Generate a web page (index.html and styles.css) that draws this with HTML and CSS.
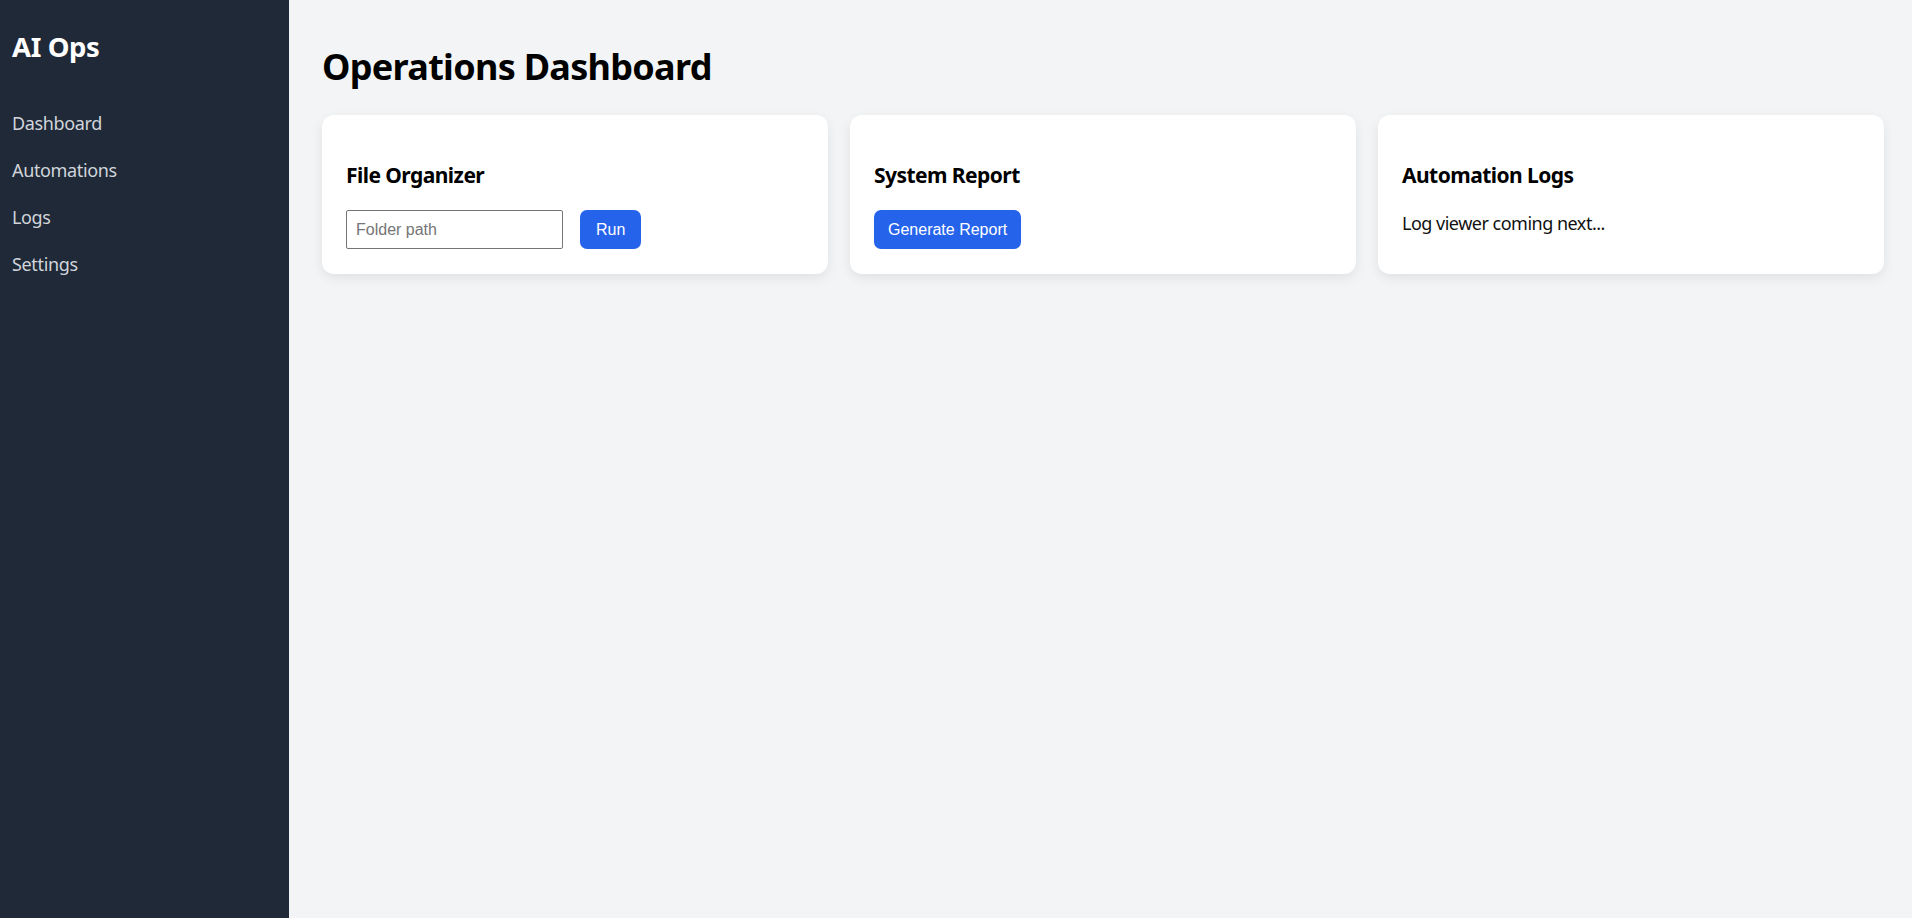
FILE: index.html
```html
<!DOCTYPE html>
<html lang="en">
<head>
    <meta charset="UTF-8">
    <meta name="viewport" content="width=device-width, initial-scale=1.0">
    <title>AI Ops</title>
    <link rel="stylesheet" href="styles.css">
</head>
<body>
    <aside class="sidebar">
        <h2>AI Ops</h2>
        <nav class="menu">
            <a href="#">Dashboard</a>
            <a href="#">Automations</a>
            <a href="#">Logs</a>
            <a href="#">Settings</a>
        </nav>
    </aside>

    <main>
        <h1>Operations Dashboard</h1>
        <section class="cards">
            <div class="card">
                <h3>File Organizer</h3>
                <div class="row">
                    <input type="text" placeholder="Folder path">
                    <button class="run">Run</button>
                </div>
            </div>
            <div class="card">
                <h3>System Report</h3>
                <div class="row">
                    <button>Generate Report</button>
                </div>
            </div>
            <div class="card">
                <h3>Automation Logs</h3>
                <p>Log viewer coming next...</p>
            </div>
        </section>
    </main>
</body>
</html>
```

FILE: styles.css
```css
/* General */
body {
    margin: 0;
    font-family: "Noto Sans", "Open Sans", sans-serif;
    display: flex;
    min-height: 100vh;
    background: #f3f4f6;
}

/* Sidebar */
.sidebar {
    width: 289px;
    flex-shrink: 0;
    box-sizing: border-box;
    padding: 28px 12px;
    background: #1f2937;
    color: white;
}

.sidebar h2 {
    margin: 0;
    font-size: 27.5px;
    line-height: 38px;
    font-weight: bold;
    letter-spacing: -0.4px;
}

.menu {
    display: flex;
    flex-direction: column;
    gap: 21px;
    margin-top: 44px;
}

.menu a {
    color: #d1d5db;
    text-decoration: none;
    font-size: 18px;
    line-height: 26px;
    letter-spacing: -0.35px;
}

/* Main */
main {
    flex: 1;
    padding: 42px 28px 0 33px;
}

main h1 {
    margin: 0 0 23px;
    font-size: 36px;
    line-height: 50px;
    font-weight: bold;
    letter-spacing: -0.7px;
    color: #000;
}

.cards {
    display: grid;
    grid-template-columns: repeat(3, 1fr);
    gap: 22px;
}

.card {
    background: white;
    border-radius: 12px;
    padding: 24px 24px 25px;
    box-shadow: 0 4px 12px rgba(0, 0, 0, 0.08);
}

.card h3 {
    margin: 21px 0 20px;
    font-size: 21px;
    line-height: 30px;
    font-weight: bold;
    letter-spacing: -0.55px;
    color: #000;
}

.card p {
    margin: 0;
    font-size: 18px;
    line-height: 26px;
    letter-spacing: -0.5px;
    color: #111;
}

.row {
    display: flex;
    gap: 17px;
}

.row input {
    width: 217px;
    height: 39px;
    box-sizing: border-box;
    padding: 0 9px;
    border: 1px solid #767676;
    border-radius: 2px;
    font-family: "Liberation Sans", Arial, sans-serif;
    font-size: 16px;
}

.row input::placeholder {
    color: #757575;
}

.row button {
    height: 39px;
    padding: 0 14px;
    border: none;
    border-radius: 7px;
    background: #2563eb;
    color: white;
    font-family: "Liberation Sans", Arial, sans-serif;
    font-size: 16px;
    cursor: pointer;
}

.row button.run {
    padding: 0 16px;
}
```
